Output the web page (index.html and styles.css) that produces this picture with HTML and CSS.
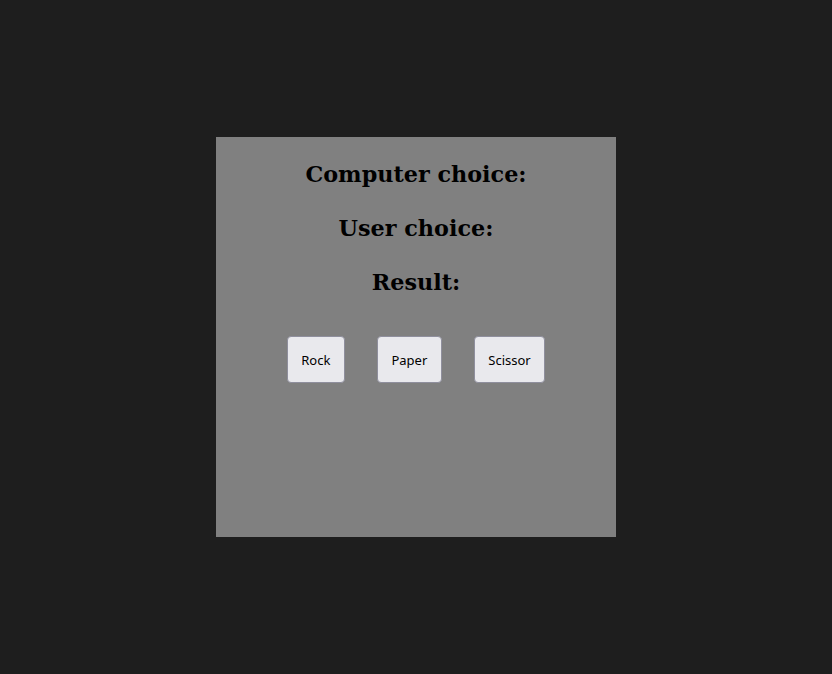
FILE: index.html
```html
<!DOCTYPE html>
<html>
<head>
<meta charset="utf-8">
<link rel="stylesheet" href="styles.css">
</head>
<body>
<div class="game">
  <h2 class="line">Computer choice:</h2>
  <h2 class="line">User choice:</h2>
  <h2 class="line">Result:</h2>
  <div class="buttons">
    <button class="btn">Rock</button>
    <button class="btn">Paper</button>
    <button class="btn">Scissor</button>
  </div>
</div>
</body>
</html>
```
FILE: styles.css
```css
html, body {
  margin: 0;
  height: 100%;
}
body {
  background: #1e1e1e;
  display: flex;
  align-items: center;
  justify-content: center;
  font-family: "DejaVu Serif", serif;
}
.game {
  width: 400px;
  height: 400px;
  background: #808080;
  display: flex;
  flex-direction: column;
  align-items: center;
  box-sizing: border-box;
}
.line {
  font-size: 22.3px;
  font-weight: bold;
  margin: 20px 0 0;
  line-height: 34px;
  color: #000;
}
.buttons {
  display: flex;
  gap: 32px;
  margin-top: 37px;
}
.btn {
  font-family: "Noto Sans", sans-serif;
  font-size: 13px;
  padding: 13.5px 13.5px;
  background: #e9e9ed;
  border: 1px solid #8f8f9d;
  border-radius: 4px;
  color: #000;
}
```
